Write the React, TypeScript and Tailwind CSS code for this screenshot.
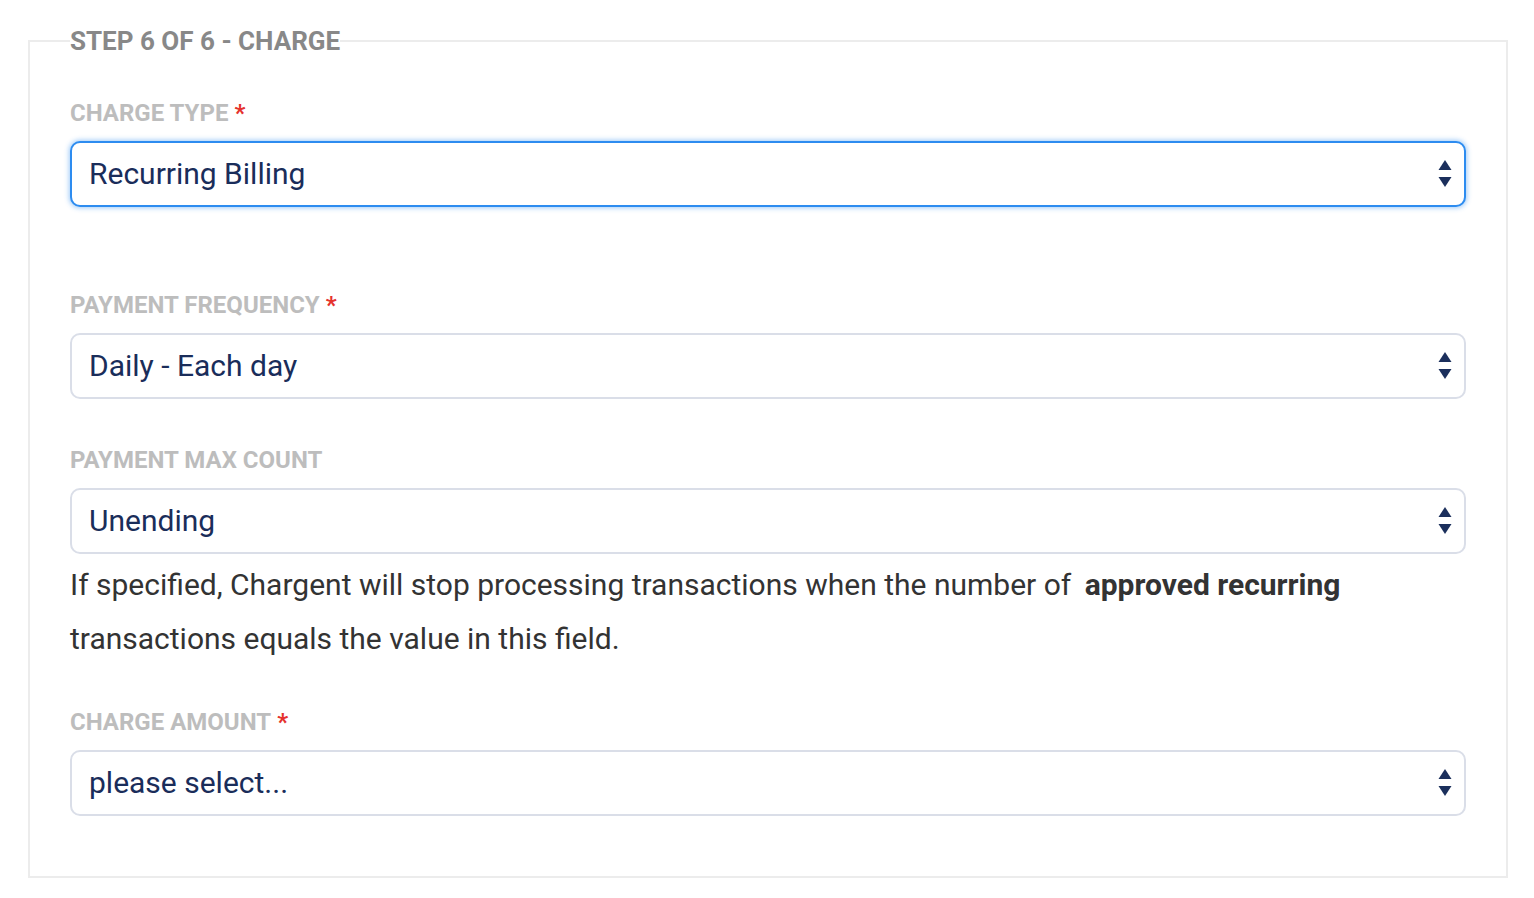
import React from "react";

const Arrows = () => (
  <svg width="14" height="28" viewBox="0 0 14 28" className="shrink-0">
    <polygon points="7,0 13.5,10 0.5,10" fill="#1b2f5c" />
    <polygon points="0.5,17 13.5,17 7,27" fill="#1b2f5c" />
  </svg>
);

const Label = ({ text, required }: { text: string; required?: boolean }) => (
  <div className="h-[28px] leading-[28px] text-[24px] font-bold text-[#bdbdbd] uppercase mb-[14px]">
    {text}
    {required && <span className="text-[#e5322d] ml-[6px]">*</span>}
  </div>
);

const Select = ({ value, focused }: { value: string; focused?: boolean }) => (
  <div
    className={
      focused
        ? "h-[66px] flex items-center justify-between pl-[17px] pr-[12px] rounded-[10px] border-2 border-[#2d8cf0] shadow-[0_0_5px_1px_rgba(45,140,240,0.45)] bg-white"
        : "h-[66px] flex items-center justify-between pl-[17px] pr-[12px] rounded-[10px] border-2 border-[#dadee8] bg-white"
    }
  >
    <span className="text-[30px] text-[#1a2d5a] leading-none">{value}</span>
    <Arrows />
  </div>
);

export default function App() {
  return (
    <div
      className="min-h-[898px] bg-white pl-[28px] pr-[26px] pt-[26px]"
      style={{ fontFamily: "Roboto, 'Liberation Sans', sans-serif" }}
    >
      <fieldset className="border-2 border-[#ececec] px-[40px] pb-[60px] pt-[43px] m-0">
        <legend className="text-[26px] leading-[30px] font-bold text-[#888888] p-0">
          STEP 6 OF 6 - CHARGE
        </legend>
        <div>
          <Label text="Charge Type" required />
          <Select value="Recurring Billing" focused />
        </div>
        <div className="mt-[84px]">
          <Label text="Payment Frequency" required />
          <Select value="Daily - Each day" />
        </div>
        <div className="mt-[47px]">
          <Label text="Payment Max Count" />
          <Select value="Unending" />
          <p className="mt-[4px] text-[30px] leading-[54px] text-[#333333]">
            If specified, Chargent will stop processing transactions when the number of{" "}
            <b className="ml-[6px] font-bold">approved recurring</b> transactions equals the value in this field.
          </p>
        </div>
        <div className="mt-[42px]">
          <Label text="Charge Amount" required />
          <Select value="please select..." />
        </div>
      </fieldset>
    </div>
  );
}
